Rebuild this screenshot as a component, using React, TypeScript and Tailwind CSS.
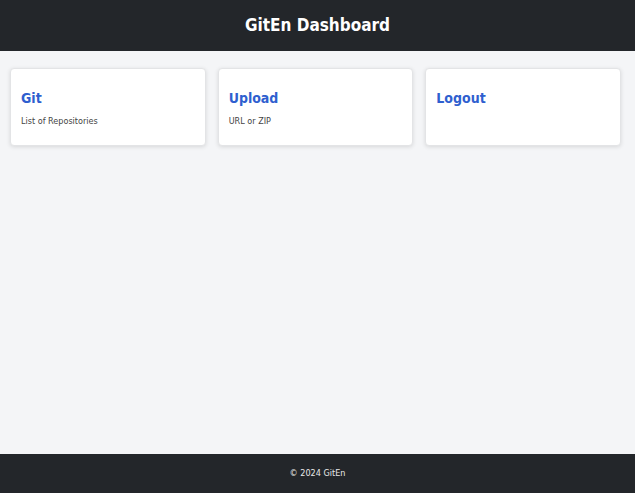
export default function App() {
  const cards = [
    { title: "Git", desc: "List of Repositories" },
    { title: "Upload", desc: "URL or ZIP" },
    { title: "Logout", desc: "" },
  ]

  return (
    <div
      className="flex min-h-screen flex-col bg-[#f4f5f7]"
      style={{ fontFamily: "'DejaVu Sans Condensed', 'DejaVu Sans', sans-serif" }}
    >
      <header className="flex h-[51px] items-center justify-center bg-[#23262a]">
        <h1 className="text-[17px] font-bold text-white">GitEn Dashboard</h1>
      </header>

      <main className="flex-1 pl-[10px] pr-[14px] pt-[17px]">
        <div className="grid grid-cols-3 gap-3">
          {cards.map((card) => (
            <div
              key={card.title}
              className="h-[78px] rounded-[4px] border border-[#e3e4e6] bg-white px-[10px] pt-[20px] shadow-[0_1px_4px_rgba(0,0,0,0.12)]"
            >
              <h2 className="text-[14px] font-bold leading-[18px] text-[#2f5fcf]">{card.title}</h2>
              {card.desc && (
                <p className="mt-[8px] text-[9px] leading-[12px] text-[#444]">{card.desc}</p>
              )}
            </div>
          ))}
        </div>
      </main>

      <footer className="flex h-[39px] items-center justify-center bg-[#23262a]">
        <p className="text-[9px] text-[#e8e8e8]">© 2024 GitEn</p>
      </footer>
    </div>
  )
}
